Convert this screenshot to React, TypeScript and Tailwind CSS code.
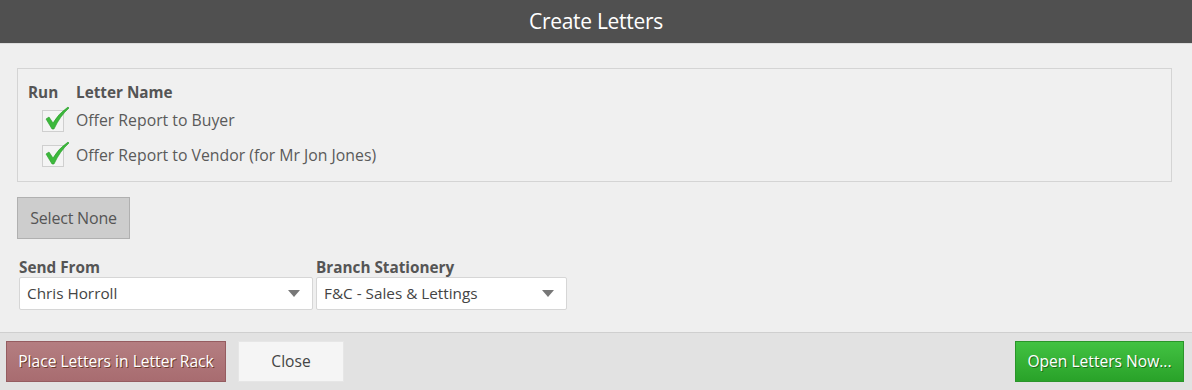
import React from 'react';

const Check = () => (
  <div className="relative w-[22px] h-[22px] border border-[#cfcfcf] bg-[#f4f4f4] shrink-0">
    <svg className="absolute left-[1px] top-[-5px]" width="26" height="26" viewBox="0 0 26 26">
      <path
        d="M2 13 L5 11 L9 17 Q14 8 24 1 L25 2 Q16 10 10 23 L8 23 Z"
        fill="#3cb93c"
        stroke="#2a9a2a"
        strokeWidth="0.6"
      />
    </svg>
  </div>
);

const Caret = () => (
  <svg width="12" height="8" viewBox="0 0 12 8">
    <path d="M0 0 L12 0 L6 7 Z" fill="#777" />
  </svg>
);

const Select = ({ value, width }: { value: string; width: string }) => (
  <div
    className={`${width} h-[33px] bg-white border border-[#d6d6d6] rounded-[2px] flex items-center justify-between pl-[7px] pr-[12px] text-[15.3px] text-[#444]`}
  >
    <span>{value}</span>
    <Caret />
  </div>
);

export default function App() {
  const letters = ['Offer Report to Buyer', 'Offer Report to Vendor (for Mr Jon Jones)'];
  return (
    <div
      className="w-[1192px] h-[390px] bg-[#efefef] flex flex-col"
      style={{ fontFamily: '"Segoe UI", "Open Sans", "Noto Sans", sans-serif' }}
    >
      <div className="h-[44px] bg-[#505050] border-b border-[#dcdcdc] flex items-center justify-center text-white text-[21px] tracking-[-0.3px]">
        Create Letters
      </div>

      <div className="flex-1 px-[17px] pt-[24px]">
        <div className="w-[1155px] h-[114px] border border-[#d4d4d4] bg-[#f0f0f0] pl-[10px] pt-[12px]">
          <div className="flex text-[15.3px] font-bold text-[#555] h-[22px] items-center">
            <span className="w-[48px]">Run</span>
            <span>Letter Name</span>
          </div>
          {letters.map((l) => (
            <div key={l} className="flex items-center h-[35px]">
              <div className="w-[48px] pl-[14px]">
                <Check />
              </div>
              <span className="text-[15.8px] text-[#5a5a5a]">{l}</span>
            </div>
          ))}
        </div>

        <button className="mt-[15px] w-[113px] h-[42px] bg-[#cdcdcd] border border-[#b0b0b0] text-[16px] text-[#555] tracking-[-0.2px]">
          Select None
        </button>

        <div className="flex gap-[3px] mt-[18px] pl-[2px]">
          <div className="flex flex-col">
            <span className="text-[15.3px] font-bold text-[#555] leading-[20px]">Send From</span>
            <Select value="Chris Horroll" width="w-[294px]" />
          </div>
          <div className="flex flex-col">
            <span className="text-[15.3px] font-bold text-[#555] leading-[20px]">Branch Stationery</span>
            <Select value="F&C - Sales & Lettings" width="w-[251px]" />
          </div>
        </div>
      </div>

      <div className="h-[58px] bg-[#e2e2e2] border-t border-[#cfcfcf] flex items-center px-[6px]">
        <button className="w-[220px] h-[41px] bg-gradient-to-b from-[#b47e81] to-[#a86c70] border border-[#955c60] text-white text-[15.6px] [text-shadow:1px_1px_0_#6b3a2a]">
          Place Letters in Letter Rack
        </button>
        <button className="ml-[12px] w-[106px] h-[41px] bg-[#f5f5f5] border border-[#e6e6e6] text-[15.6px] text-[#444]">
          Close
        </button>
        <button className="ml-auto mr-[2px] w-[169px] h-[41px] bg-gradient-to-b from-[#42c242] to-[#29a229] border border-[#2a952a] text-white text-[15.6px] [text-shadow:1px_1px_0_#1d6e1d]">
          Open Letters Now...
        </button>
      </div>
    </div>
  );
}
